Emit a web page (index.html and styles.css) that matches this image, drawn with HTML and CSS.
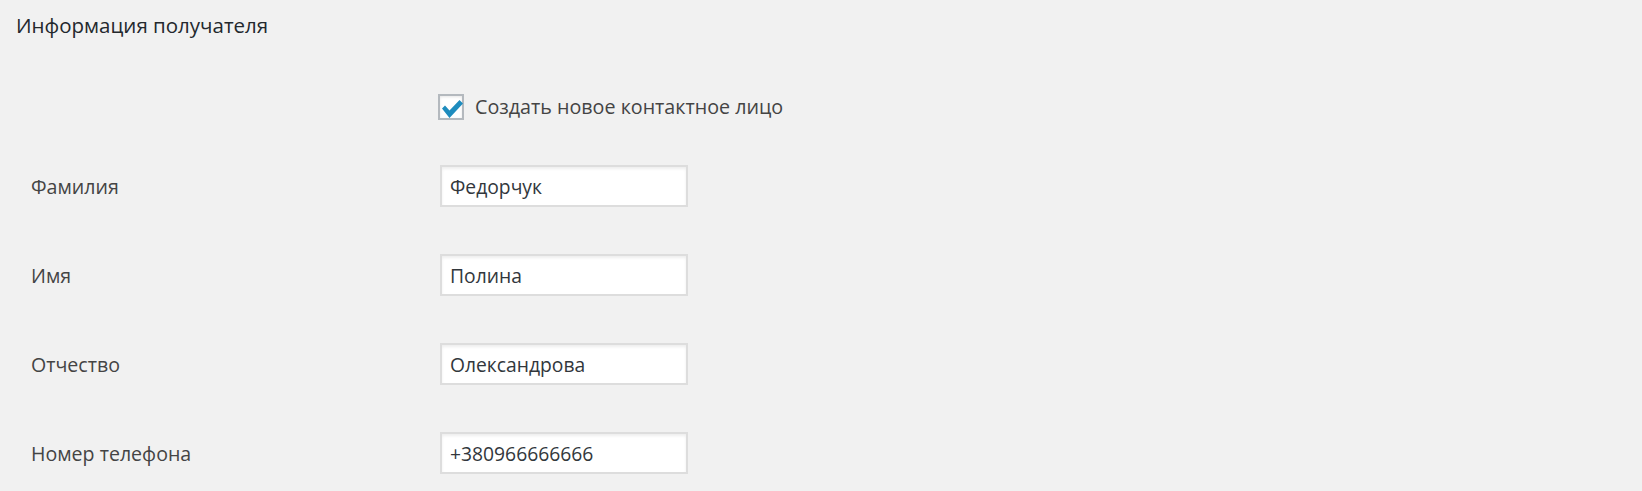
FILE: index.html
```html
<!DOCTYPE html>
<html lang="ru">
<head>
  <meta charset="UTF-8">
  <title>Информация получателя</title>
  <link rel="stylesheet" href="styles.css">
</head>
<body>
  <div class="page">
    <h2 class="title">Информация получателя</h2>
    <div class="check-row">
      <label class="check">
        <span class="box">
          <svg width="26" height="26" viewBox="0 0 26 26">
            <path d="M4 14.5 L7 11.5 L11.5 16.5 L21.5 6 L25 9.5 L11.5 24 Z" fill="#1e8cbe"/>
          </svg>
        </span>
        <span class="check-text">Создать новое контактное лицо</span>
      </label>
    </div>
    <div class="fields">
      <div class="row">
        <label class="label">Фамилия</label>
        <input class="field" value="Федорчук">
      </div>
      <div class="row">
        <label class="label">Имя</label>
        <input class="field" value="Полина">
      </div>
      <div class="row">
        <label class="label">Отчество</label>
        <input class="field" value="Олександрова">
      </div>
      <div class="row">
        <label class="label">Номер телефона</label>
        <input class="field" value="+380966666666">
      </div>
    </div>
  </div>
</body>
</html>
```

FILE: styles.css
```css
body{
  margin: 0;
  background-color: #f1f1f1;
  font-family: "Open Sans", "Noto Sans", sans-serif;
  color: #444;
}
.page{
  padding: 0 16px;
}
.title{
  margin: 0;
  padding-top: 12px;
  font-size: 20.5px;
  font-weight: normal;
  line-height: 26px;
  color: #23282d;
}
/* чекбокс */
.check-row{
  margin-top: 55px;
  padding-left: 422px;
}
.check{
  display: flex;
  align-items: center;
  gap: 11px;
}
.box{
  width: 22px;
  height: 22px;
  border: 2px solid #b4b9be;
  background-color: #fff;
  box-shadow: inset 0 1px 3px rgba(0,0,0,.1);
  position: relative;
}
.box svg{
  position: absolute;
  left: -2px;
  top: -2px;
}
.check-text{
  font-size: 19.7px;
  color: #444;
}
/* поля */
.fields{
  margin-top: 45px;
  display: flex;
  flex-direction: column;
  gap: 47px;
}
.row{
  display: flex;
  align-items: center;
}
.label{
  width: 409px;
  padding-left: 15px;
  font-size: 19.6px;
  color: #444;
}
.field{
  width: 248px;
  height: 42px;
  box-sizing: border-box;
  margin: 0;
  border: 2px solid #ddd;
  box-shadow: inset 0 2px 3px rgba(0,0,0,.07);
  background-color: #fff;
  padding: 0 8px;
  font-family: "Open Sans", "Noto Sans", sans-serif;
  font-size: 19.3px;
  color: #32373c;
  outline: none;
}
```
